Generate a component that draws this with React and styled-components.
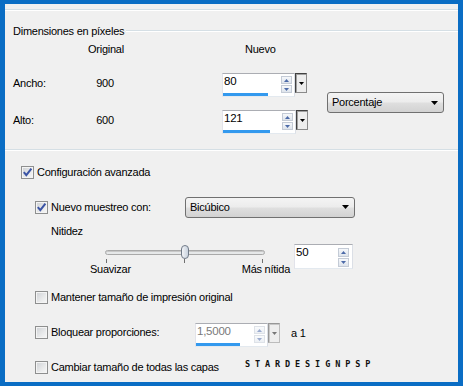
import React from 'react';
import styled, { createGlobalStyle } from 'styled-components';

const Global = createGlobalStyle`
  html, body { margin: 0; padding: 0; }
  body {
    width: 463px; height: 386px; overflow: hidden;
    font-family: "Liberation Sans", Arial, sans-serif;
    font-size: 11px; color: #000;
  }
`;

const Frame = styled.div`
  box-sizing: border-box;
  width: 463px; height: 386px;
  border-style: solid;
  border-color: #0A6DC4;
  border-width: 4px 5px 4px 5px;
  background: #F0F0F0;
  display: flex; flex-direction: column;
  letter-spacing: -0.25px;
`;

const Rule = styled.div`
  flex: none;
  height: 1px;
  background: #D5DFE5;
  border-bottom: 1px solid #FFFFFF;
  margin-top: ${p => p.$mt}px;
`;

const GroupHead = styled.div`
  display: flex; align-items: center;
  height: 14px; margin-top: 13px;
  padding-left: 8px;
`;

const GroupLine = styled.div`
  flex: 1; margin-left: 2px;
  height: 1px; background: #D5DFE5; border-bottom: 1px solid #fff;
`;

const DimGrid = styled.div`
  display: grid;
  grid-template-columns: 75px 34px 100px 86px 19px 117px;
  grid-template-rows: 17px 24px 24px;
  row-gap: 13px;
  margin-top: 5px;
  padding-left: 8px;
  line-height: 13px;
`;

const Cell = styled.div`
  grid-column: ${p => p.$col};
  grid-row: ${p => p.$row};
  text-align: ${p => p.$center ? 'center' : 'left'};
  padding-top: ${p => p.$pt || 0}px;
  padding-left: ${p => p.$pl || 0}px;
  white-space: nowrap;
`;

const ComboCell = styled.div`
  grid-column: 6; grid-row: 2 / span 2;
  align-self: center;
  margin-top: -2px;
`;

const Combo = styled.div`
  box-sizing: border-box;
  width: ${p => p.$w}px; height: 21px;
  border: 1px solid #707070; border-radius: 3px;
  background: linear-gradient(#F4F4F4 0%, #ECECEC 48%, #DFDFDF 52%, #D2D2D2 100%);
  display: flex; align-items: center; justify-content: space-between;
  padding: 0 5px 0 4px;
  line-height: 13px;
`;

const SpinWrap = styled.div`
  display: flex; align-items: flex-start;
`;

const Field = styled.div`
  box-sizing: border-box;
  width: ${p => p.$w}px; height: ${p => p.$h}px;
  background: #fff;
  border: 1px solid;
  border-color: #ABADB3 #DBDFE6 #E3E9EF #E2E3EA;
  display: flex; flex-direction: column;
`;

const FieldTop = styled.div`
  flex: 1; display: flex; align-items: flex-start;
`;

const FieldText = styled.span`
  flex: 1;
  padding-left: 1px;
  line-height: 15px;
  font-size: 11.5px;
  color: ${p => p.$disabled ? '#7A7A7A' : '#000'};
`;

const Arrows = styled.div`
  display: flex; flex-direction: column; gap: 1px;
  margin: ${p => p.$m};
  opacity: ${p => p.$disabled ? 0.55 : 1};
`;

const ArrowBtn = styled.div`
  width: 9px; height: ${p => p.$h}px;
  border: 1px solid #C4CBD6;
  background: linear-gradient(#F6F8FB, #DEE4EC);
  display: flex; align-items: center; justify-content: center;
`;

const Bar = styled.div`
  height: 4px; background: #3399EE;
`;

const DropBtn = styled.div`
  box-sizing: border-box;
  width: 12px; height: 20px;
  border: 1px solid;
  border-color: #404040 #8A8A8A #8A8A8A #404040;
  box-shadow: inset 1px 1px 0 #A0A0A0;
  background: #EDEDED;
  display: flex; align-items: center; justify-content: center;
  opacity: ${p => p.$disabled ? 0.5 : 1};
`;

const Section = styled.div`
  display: flex; flex-direction: column;
`;

const Row = styled.div`
  display: flex;
  align-items: ${p => p.$align || 'center'};
  margin-top: ${p => p.$mt}px;
  padding-left: ${p => p.$pl}px;
  height: ${p => p.$h ? p.$h + 'px' : 'auto'};
  line-height: 13px;
`;

const CheckLabel = styled.label`
  display: flex; align-items: center; gap: 3px;
  width: ${p => p.$w ? p.$w + 'px' : 'auto'};
  height: ${p => p.$h ? p.$h + 'px' : 'auto'};
  flex: none;
  white-space: nowrap;
`;

const Box = styled.span`
  box-sizing: border-box;
  width: 13px; height: 13px; flex: none;
  border: 1px solid #8E8F8F;
  box-shadow: inset 0 0 0 1px #F4F4F4;
  background: linear-gradient(135deg, #CDD0D4 0%, #E9EAEB 60%, #F8F8F8 100%);
  display: flex; align-items: center; justify-content: center;
`;

const Plain = styled.span`
  margin-left: ${p => p.$ml || 0}px;
  white-space: nowrap;
`;

const SliderBlock = styled.div`
  width: 200px; flex: none;
  display: flex; flex-direction: column;
`;

const TrackArea = styled.div`
  position: relative;
  height: 14px; margin-top: 1px;
  display: flex; align-items: center;
`;

const Track = styled.div`
  box-sizing: border-box;
  margin-left: 15px; width: 160px; height: 5px;
  border: 1px solid #A9A9A9; border-radius: 3px;
  background: #E6E8E9;
  box-shadow: inset 0 1px 0 #C8C8C8;
`;

const Thumb = styled.div`
  position: absolute; left: ${p => p.$x}px; top: 0;
  box-sizing: border-box;
  width: 8px; height: 14px;
  border: 1px solid #707A88; border-radius: 4px;
  background: linear-gradient(90deg, #F2F4F7, #C9D2DE);
`;

const Ticks = styled.div`
  height: 4px;
  margin-left: 16px; width: 157px;
  display: flex; justify-content: space-between;
`;

const Tick = styled.span`
  width: 1px; height: 4px; background: #707070;
`;

const SliderLabels = styled.div`
  display: flex; justify-content: space-between;
  line-height: 13px;
`;

const Watermark = styled.span`
  font-family: "DejaVu Sans Mono", "Liberation Mono", monospace;
  font-weight: bold;
  font-size: 8.5px;
  letter-spacing: 4.9px;
  line-height: 8px;
  align-self: flex-start;
  margin-top: -1px;
  color: #111;
`;

const Check = () => (
  <svg width="11" height="11" viewBox="0 0 11 11">
    <path d="M1.8 5.2 L4.3 8.2 L9.4 1.6" fill="none" stroke="#3B54A5" strokeWidth="2" strokeLinejoin="miter" />
  </svg>
);

const Tri = ({ up, color = '#4C6AA8' }) => (
  <svg width="5" height="3" viewBox="0 0 5 3">
    <path d={up ? 'M0 3 L2.5 0 L5 3 Z' : 'M0 0 L5 0 L2.5 3 Z'} fill={color} />
  </svg>
);

const BlackTri = ({ w = 7, h = 4 }) => (
  <svg width={w} height={h} viewBox={`0 0 ${w} ${h}`}>
    <path d={`M0 0 L${w} 0 L${w / 2} ${h} Z`} fill="#000" />
  </svg>
);

const CheckBox = ({ checked, children, w, h }) => (
  <CheckLabel $w={w} $h={h}>
    <Box>{checked && <Check />}</Box>
    <span>{children}</span>
  </CheckLabel>
);

const Spin = ({ value, w, h = 24, bar, drop, disabled, arrowH = 6, arrowM = '2px 2px 0 0' }) => (
  <SpinWrap>
    <Field $w={w} $h={h}>
      <FieldTop>
        <FieldText $disabled={disabled}>{value}</FieldText>
        <Arrows $m={arrowM} $disabled={disabled}>
          <ArrowBtn $h={arrowH}><Tri up /></ArrowBtn>
          <ArrowBtn $h={arrowH}><Tri /></ArrowBtn>
        </Arrows>
      </FieldTop>
      {bar ? <Bar style={{ width: bar }} /> : null}
    </Field>
    {drop && <DropBtn $disabled={disabled}><BlackTri w={5} h={3} /></DropBtn>}
  </SpinWrap>
);

export default function App() {
  return (
    <>
      <Global />
      <Frame>
        <Rule $mt={5} />
        <GroupHead>
          <span>Dimensiones en píxeles</span>
          <GroupLine />
        </GroupHead>
        <DimGrid>
          <Cell $col={2} $row={1} $center>Original</Cell>
          <Cell $col={4} $row={1} $pl={23}>Nuevo</Cell>
          <Cell $col={1} $row={2} $pt={4}>Ancho:</Cell>
          <Cell $col={2} $row={2} $pt={4} $center>900</Cell>
          <Cell $col={4} $row={2}><Spin value="80" w={73} bar={45} drop /></Cell>
          <Cell $col={1} $row={3} $pt={4}>Alto:</Cell>
          <Cell $col={2} $row={3} $pt={4} $center>600</Cell>
          <Cell $col={4} $row={3}><Spin value="121" w={74} bar={47} drop /></Cell>
          <ComboCell>
            <Combo $w={117}><span>Porcentaje</span><BlackTri /></Combo>
          </ComboCell>
        </DimGrid>

        <Rule $mt={15} />
        <Section>
          <Row $mt={15} $pl={16} $h={13}>
            <CheckBox checked>Configuración avanzada</CheckBox>
          </Row>
          <Row $mt={18} $pl={30} $h={20}>
            <CheckBox checked w={150}>Nuevo muestreo con:</CheckBox>
            <Combo $w={170}><span>Bicúbico</span><BlackTri /></Combo>
          </Row>
          <Row $mt={8} $pl={46} $h={13}>
            <Plain>Nitidez</Plain>
          </Row>
          <Row $mt={6} $pl={85} $align="flex-start">
            <SliderBlock>
              <TrackArea>
                <Track />
                <Thumb $x={91} />
              </TrackArea>
              <Ticks><Tick /><Tick /><Tick /></Ticks>
              <SliderLabels><span>Suavizar</span><span>Más nítida</span></SliderLabels>
            </SliderBlock>
            <Plain $ml={4}>
              <Spin value="50" w={59} h={25} arrowH={7} arrowM="3px 3px 0 0" />
            </Plain>
          </Row>
          <Row $mt={15} $pl={30} $h={13}>
            <CheckBox>Mantener tamaño de impresión original</CheckBox>
          </Row>
          <Row $mt={19} $pl={30} $align="flex-start">
            <CheckBox w={160} h={19}>Bloquear proporciones:</CheckBox>
            <Spin value="1,5000" w={73} bar={44} drop disabled />
            <Plain $ml={11} style={{ lineHeight: '21px' }}>a 1</Plain>
          </Row>
          <Row $mt={14} $pl={30} $h={13} $align="flex-start">
            <CheckBox w={210} h={13}>Cambiar tamaño de todas las capas</CheckBox>
            <Watermark>STARDESIGNPSP</Watermark>
          </Row>
        </Section>
      </Frame>
    </>
  );
}
